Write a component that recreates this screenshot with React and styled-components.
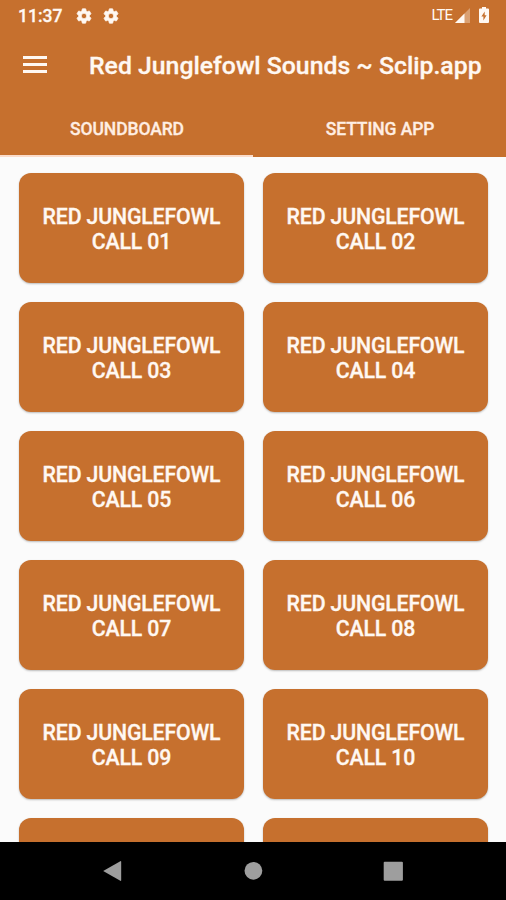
import React, { useState } from 'react'
import styled, { createGlobalStyle } from 'styled-components'
import { MdSettings } from 'react-icons/md'

const sounds = Array.from({ length: 10 }, (_, i) => String(i + 1).padStart(2, '0'))
const tabs = ['Soundboard', 'Setting App']

const App = () => {
  const [active, setActive] = useState(0)

  return (
    <Screen>
      <GlobalStyle />
      <Header>
        <StatusBar>
          <Clock>11:37</Clock>
          <Notifications>
            <MdSettings />
            <MdSettings />
          </Notifications>
          <Network>LTE</Network>
          <SignalIcon viewBox="0 0 15 15">
            <path d="M15 0V15H0Z" fillOpacity="0.35" />
            <path d="M9.5 5.5V15H0Z" />
          </SignalIcon>
          <BatteryIcon viewBox="0 0 10 16">
            <path
              fillRule="evenodd"
              d="M3 0H7V1.6H9Q10 1.6 10 2.6V15Q10 16 9 16H1Q0 16 0 15V2.6Q0 1.6 1 1.6H3ZM5.7 4.4L2.4 9.6H4.4V13.4L7.6 8.2H5.7Z"
            />
          </BatteryIcon>
        </StatusBar>
        <ToolBar>
          <MenuButton aria-label="menu">
            <MenuLine />
            <MenuLine />
            <MenuLine />
          </MenuButton>
          <Title>Red Junglefowl Sounds ~ Sclip.app</Title>
        </ToolBar>
        <Tabs>
          {tabs.map((tab, i) => (
            <Tab key={tab} active={active === i ? 1 : 0} onClick={() => setActive(i)}>
              {tab}
            </Tab>
          ))}
        </Tabs>
      </Header>
      <Board>
        {sounds.map(number => (
          <SoundButton key={number}>
            Red Junglefowl
            <br />
            Call {number}
          </SoundButton>
        ))}
        <SoundButton aria-label="next sound" />
        <SoundButton aria-label="next sound" />
      </Board>
      <NavBar>
        <NavButton aria-label="back">
          <svg width="20" height="22" viewBox="0 0 20 22">
            <path d="M17.3 1.2Q18.2 0.7 18.2 1.8V20.2Q18.2 21.3 17.3 20.8L0.2 11Z" />
          </svg>
        </NavButton>
        <NavButton aria-label="home">
          <svg width="18" height="18" viewBox="0 0 18 18">
            <circle cx="9.4" cy="8.8" r="8.9" />
          </svg>
        </NavButton>
        <NavButton aria-label="recent apps">
          <svg width="20" height="20" viewBox="0 0 20 20">
            <rect x="0.7" y="0.8" width="19.2" height="19" rx="1" />
          </svg>
        </NavButton>
      </NavBar>
    </Screen>
  )
}

export default App


const GlobalStyle = createGlobalStyle`
  * {
    box-sizing: border-box;
  }
  body {
    margin: 0;
    font-family: Roboto, sans-serif;
  }
  button {
    border: 0;
    padding: 0;
    background: none;
    font-family: inherit;
  }
`

const Screen = styled.div`
  display: flex;
  flex-direction: column;
  width: 506px;
  height: 900px;
  overflow: hidden;
  background: #fbfbfb;
  color: #fff8f2;
  -webkit-text-stroke: 0.3px;
`

const Header = styled.header`
  flex: none;
  height: 157px;
  background: #c6702e;
`

const StatusBar = styled.div`
  display: flex;
  align-items: center;
  height: 31px;
  padding: 0 17px 0 18px;
`

const Clock = styled.span`
  width: 57px;
  padding-top: 1px;
  font-size: 17.5px;
  font-weight: 500;
  line-height: 31px;
`

const Notifications = styled.div`
  display: flex;
  gap: 9px;
  flex: 1;
  font-size: 18px;

  path:last-child {
    stroke: currentColor;
    stroke-width: 1px;
  }
`

const Network = styled.span`
  margin-right: 3px;
  font-size: 15px;
  letter-spacing: -1px;
  line-height: 29px;
  -webkit-text-stroke: 0;
`

const SignalIcon = styled.svg`
  width: 15px;
  height: 15px;
  margin-right: 9px;
  fill: #fff8f2;
`

const BatteryIcon = styled.svg`
  width: 10px;
  height: 16px;
  margin-top: -1px;
  fill: #fff8f2;
`

const ToolBar = styled.div`
  display: flex;
  align-items: center;
  height: 69px;
  padding-left: 23px;
`

const MenuButton = styled.button`
  display: flex;
  flex-direction: column;
  gap: 4px;
  width: 24px;
  margin: -2px 42px 0 0;
`

const MenuLine = styled.span`
  height: 3px;
  background: #fff8f2;
`

const Title = styled.h1`
  margin: 0;
  font-size: 24.8px;
  font-weight: 500;
  white-space: nowrap;
`

const Tabs = styled.div`
  display: grid;
  grid-template-columns: 1fr 1fr;
  height: 57px;
`

const Tab = styled.button`
  padding: 3px 0 0 1px;
  border-bottom: 2px solid ${({ active }) => (active ? '#fbdccb' : 'transparent')};
  color: #ffeee3;
  font-size: 17.5px;
  font-weight: 500;
  letter-spacing: -0.1px;
  text-transform: uppercase;
  -webkit-text-stroke: 0.3px;
`

const Board = styled.main`
  display: grid;
  grid-template-columns: 225px 225px;
  grid-auto-rows: 110px;
  gap: 19px;
  flex: 1;
  min-height: 0;
  padding: 16px 19px 0;
  overflow: hidden;
`

const SoundButton = styled.button`
  padding: 2px 0 0;
  border-radius: 12px;
  background: #c6702e;
  box-shadow: 0 1px 2px rgba(0, 0, 0, 0.25);
  color: #fff8f2;
  font-size: 21.3px;
  font-weight: 500;
  letter-spacing: -0.17px;
  line-height: 25px;
  text-transform: uppercase;
  -webkit-text-stroke: 0.3px;
`

const NavBar = styled.nav`
  display: flex;
  justify-content: center;
  flex: none;
  height: 58px;
  background: #000;
`

const NavButton = styled.button`
  display: flex;
  align-items: center;
  justify-content: center;
  width: 140px;

  svg {
    fill: #9e9e9e;
    overflow: visible;
  }
`
